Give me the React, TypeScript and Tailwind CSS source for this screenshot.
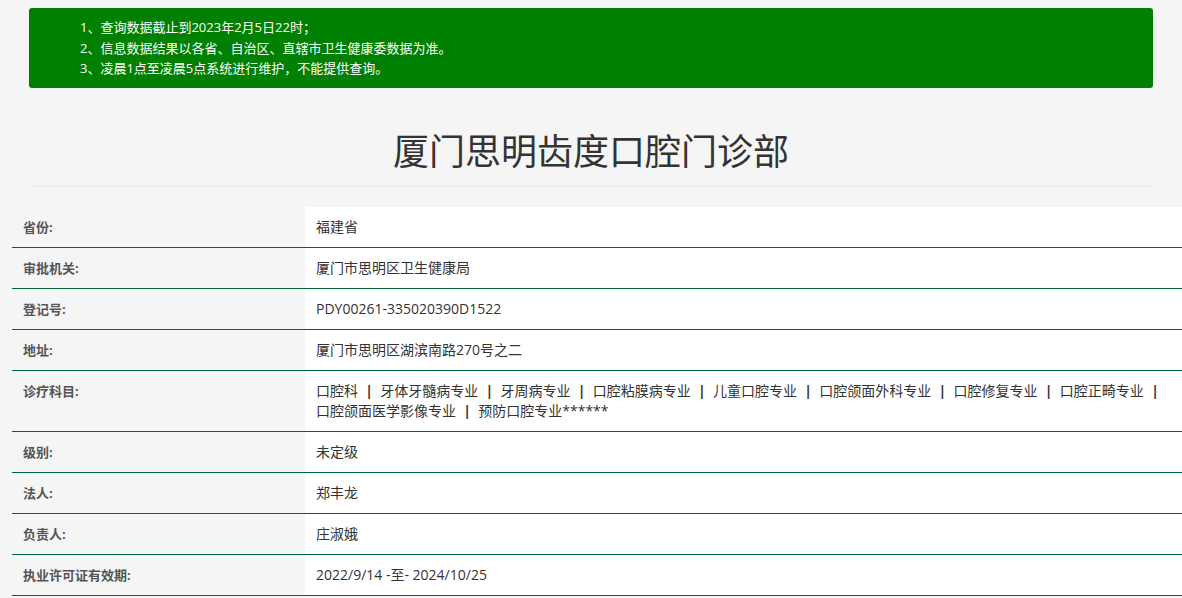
export default function App() {
  const rows: [string, string | string[]][] = [
    ["省份:", "福建省"],
    ["审批机关:", "厦门市思明区卫生健康局"],
    ["登记号:", "PDY00261-335020390D1522"],
    ["地址:", "厦门市思明区湖滨南路270号之二"],
    ["诊疗科目:", ["口腔科", "牙体牙髓病专业", "牙周病专业", "口腔粘膜病专业", "儿童口腔专业", "口腔颌面外科专业", "口腔修复专业", "口腔正畸专业", "口腔颌面医学影像专业", "预防口腔专业******"]],
    ["级别:", "未定级"],
    ["法人:", "郑丰龙"],
    ["负责人:", "庄淑娥"],
    ["执业许可证有效期:", "2022/9/14 -至- 2024/10/25"],
  ];
  return (
    <div className="min-h-[598px] bg-[#f5f5f5] pt-2 text-[14px]" style={{ fontFamily: '"Open Sans","Noto Sans CJK SC",sans-serif' }}>
      <div className="mx-[29px] h-[80px] rounded-[3px] bg-[#008000] pl-[51px] pt-[9px] text-[13px] text-white leading-[20.5px]">
        <div>1、查询数据截止到2023年2月5日22时；</div>
        <div>2、信息数据结果以各省、自治区、直辖市卫生健康委数据为准。</div>
        <div>3、凌晨1点至凌晨5点系统进行维护，不能提供查询。</div>
      </div>
      <div className="mx-[29px] mt-[40px] border-b border-[#e8e8e8] pb-[10px] text-center text-[36px] leading-[48px] text-[#333]">
        厦门思明齿度口腔门诊部
      </div>
      <div className="ml-[12px] mt-[20px]">
        {rows.map(([k, v]) => (
          <div key={k} className="flex border-b border-[#006633]">
            <div className="w-[293px] shrink-0 pl-[11px] pt-[10px] pb-[10px] leading-[20px] text-[13px] font-bold text-[#555]">{k}</div>
            <div className="flex-1 bg-white pl-[11px] pr-[6px] pt-[10px] pb-[10px] leading-[20px] text-[#333]">
              {Array.isArray(v)
                ? v.map((s, i) => (
                    <span key={i}>
                      {i > 0 && <span className="font-bold"> &nbsp;|&nbsp; </span>}
                      {s}
                    </span>
                  ))
                : v}
            </div>
          </div>
        ))}
      </div>
    </div>
  );
}
